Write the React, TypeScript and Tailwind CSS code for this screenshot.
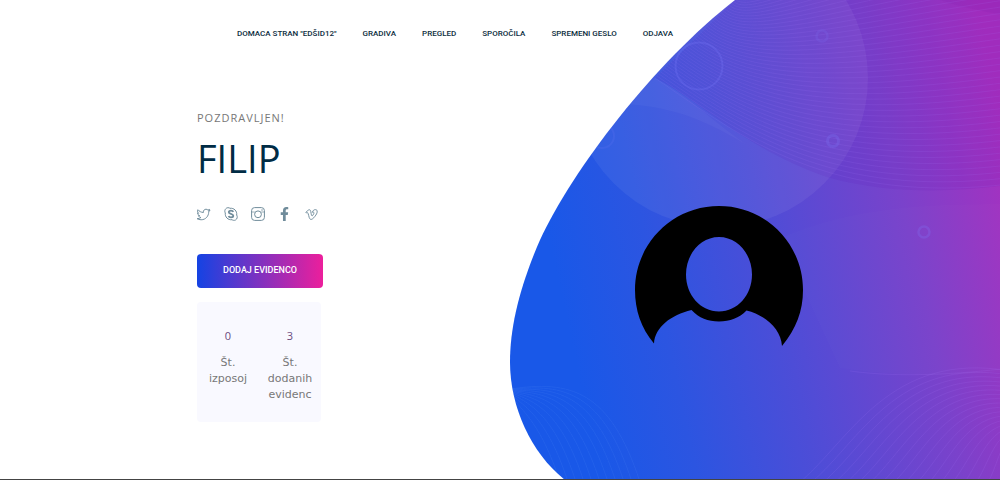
import { FaFacebookF, FaTwitter, FaVimeoV } from "react-icons/fa";

const links = [
  'DOMACA STRAN "EDŠID12"',
  "GRADIVA",
  "PREGLED",
  "SPOROČILA",
  "SPREMENI GESLO",
  "ODJAVA",
];

const stats = [
  { value: "0", label: "Št. izposoj" },
  { value: "3", label: "Št. dodanih evidenc" },
];

const outline = "size-[13px] overflow-visible fill-none stroke-current [stroke-width:38px]";

const socials = [
  { name: "Twitter", icon: <FaTwitter className={outline} /> },
  { name: "Skype", icon: <SkypeIcon /> },
  { name: "Instagram", icon: <InstagramIcon /> },
  { name: "Facebook", icon: <FaFacebookF className="size-[14px]" /> },
  { name: "Vimeo", icon: <FaVimeoV className={outline} /> },
];

function SkypeIcon() {
  return (
    <svg viewBox="0 0 14 14" className="size-[14px] shrink-0" fill="none" stroke="currentColor">
      <path d="M4 0.700C5 0.700 5.500 1 6 1.300C10 0.800 13.200 4 12.700 8C13.700 9.800 13.300 12 11.500 13C10.300 13.600 9 13.400 8 12.700C4 13.200 0.800 10 1.300 6C0 3.700 1.500 0.800 4 0.700Z" />
      <path
        d="M9.300 4.900C8.900 3.900 7.900 3.600 7 3.600C5.800 3.600 4.800 4.200 4.800 5.200C4.800 7.300 9.300 6.400 9.300 8.800C9.300 9.900 8.200 10.400 7 10.400C5.900 10.400 4.900 10 4.600 9"
        strokeWidth="1.8"
      />
    </svg>
  );
}

function InstagramIcon() {
  return (
    <svg viewBox="0 0 14 14" className="size-[14px] shrink-0" fill="none" stroke="currentColor">
      <rect x="0.6" y="0.6" width="12.8" height="12.8" rx="3" />
      <circle cx="7" cy="7.3" r="3.4" />
      <path d="M0.6 5H3.8M10.2 5H13.4" strokeWidth="0.7" />
      <circle cx="11" cy="3" r="0.7" fill="currentColor" stroke="none" />
    </svg>
  );
}

type Curve = number[];

// Blends two cubic curves into a band of evenly spaced lines.
function band(from: Curve, to: Curve, count: number): string[] {
  return Array.from({ length: count }, (_, i) => {
    const t = i / (count - 1);
    const p = from.map((v, k) => (v + (to[k] - v) * t).toFixed(1));
    return `M${p[0]} ${p[1]}C${p[2]} ${p[3]} ${p[4]} ${p[5]} ${p[6]} ${p[7]}`;
  });
}

const upperWaves = band(
  [655, 78, 745, 140, 830, 205, 1010, 184],
  [740, -8, 750, 10, 830, -60, 1010, -90],
  44,
);
const rightWaves = band(
  [800, 482, 850, 440, 890, 350, 1010, 371],
  [1000, 482, 1005, 470, 1008, 450, 1010, 440],
  18,
);
const leftWaves = band(
  [510, 389, 570, 380, 610, 390, 640, 482],
  [510, 394, 520, 410, 540, 420, 560, 482],
  11,
);

function HeroArt() {
  return (
    <svg
      viewBox="510 0 490 480"
      preserveAspectRatio="xMaxYMin slice"
      className="col-start-1 row-start-1 h-0 min-h-full w-[49%] justify-self-end"
      aria-hidden="true"
    >
      <defs>
        <linearGradient id="sky" gradientUnits="userSpaceOnUse" x1="560" y1="290" x2="1020" y2="190">
          <stop offset="0" stopColor="#1958e8" />
          <stop offset="0.2" stopColor="#2c55e1" />
          <stop offset="0.45" stopColor="#4d4dd7" />
          <stop offset="0.75" stopColor="#7a42cb" />
          <stop offset="1" stopColor="#a830bf" />
        </linearGradient>
        <clipPath id="drop">
          <path d="M735 0C655 62 572 170 540 240C519 288 510 328 510 362C510 408 532 454 565 480H1000V0Z" />
        </clipPath>
      </defs>
      <g clipPath="url(#drop)">
        <rect x="510" width="490" height="480" fill="url(#sky)" />
        <circle cx="719" cy="78" r="149" fill="#fff" fillOpacity="0.06" />
        <path
          d="M655 78C700 100 745 150 830 178C890 194 950 192 1000 186V0H735Z"
          fill="#5a10b0"
          fillOpacity="0.09"
        />
        <path d="M655 78C690 95 722 132 765 156C715 125 680 106 620 104Z" fill="#fff" fillOpacity="0.03" />
        <path d="M780 238C850 208 920 204 1000 204V372C930 378 880 374 840 368Z" fill="#fff" fillOpacity="0.01" />
        <path d="M940 0Q970 10 1000 14V0Z" fill="#500090" fillOpacity="0.05" />
        <g fill="none" stroke="#a880ff" strokeWidth="0.7" strokeOpacity="0.17">
          {upperWaves.map((d) => (
            <path key={d} d={d} />
          ))}
        </g>
        <g fill="none" stroke="#b080ff" strokeWidth="0.8" strokeOpacity="0.16">
          <path d="M850 371C900 378 960 374 1010 368" />
          {rightWaves.map((d) => (
            <path key={d} d={d} />
          ))}
        </g>
        <g fill="none" stroke="#70a0ff" strokeWidth="0.8" strokeOpacity="0.14">
          {leftWaves.map((d) => (
            <path key={d} d={d} />
          ))}
        </g>
        <g fill="none" stroke="#8080ff" strokeOpacity="0.22">
          <circle cx="699" cy="66" r="23.5" strokeWidth="2" />
          <circle cx="822" cy="36" r="5.5" strokeWidth="2.5" strokeOpacity="0.14" />
          <circle cx="833" cy="141" r="5.5" strokeWidth="3" />
          <circle cx="924" cy="232" r="5.5" strokeWidth="2.5" />
          <circle cx="602" cy="136" r="12" strokeWidth="2" strokeOpacity="0.12" />
        </g>
      </g>
      <path
        fillRule="evenodd"
        d="M654 343.5C641 328 635 310 635 290C635 244 672 206 719 206C766 206 803 244 803 290C803 311 796 329 782 346C781 329 765 315 746.500 310.500C739 318 730 321.500 719 321.500C708 321.500 699 318 691.500 310C671 315 655 327 654 343.500ZM719 237C700.500 237 686 254 686 274.500C686 295 700.500 311.500 719 311.500C737.500 311.500 752 295 752 274.500C752 254 737.500 237 719 237Z"
        fill="#000"
      />
    </svg>
  );
}

export default function App() {
  return (
    <div className="grid min-h-screen grid-cols-1 border-b border-[#444] bg-white font-['Open_Sans','Noto_Sans',sans-serif]">
      <HeroArt />
      <div className="z-10 col-start-1 row-start-1 flex flex-col">
        <header className="pt-6 pl-[237px]">
          <nav className="flex gap-[26px] font-['Roboto',sans-serif] text-[8px] leading-5 font-medium whitespace-nowrap text-[#0b2c40]">
            {links.map((label) => (
              <a key={label} href="#">
                {label}
              </a>
            ))}
          </nav>
        </header>
        <main className="flex flex-col items-start pt-16 pl-[197px]">
          <p className="text-[11px] leading-5 tracking-[1px] text-[#777]">POZDRAVLJEN!</p>
          <h1 className="mt-1 text-[38px] leading-[52px] text-[#002c45]">FILIP</h1>
          <div className="mt-[22px] flex h-4 items-center gap-[14px] text-[#708c9b]">
            {socials.map(({ name, icon }) => (
              <a key={name} href="#" aria-label={name} className="flex w-[13px] justify-center">
                {icon}
              </a>
            ))}
          </div>
          <button
            type="button"
            className="mt-8 h-[34px] w-[126px] rounded bg-linear-to-r/srgb from-[#1443e3] to-[#ec1f9c] font-['Roboto',sans-serif] text-[9px] font-medium text-white"
          >
            DODAJ EVIDENCO
          </button>
          <dl className="mt-[14px] flex h-[120px] w-[124px] rounded-sm bg-[#f9f9ff] pt-[26px] text-center leading-4">
            {stats.map(({ value, label }) => (
              <div key={label} className="flex w-1/2 flex-col-reverse justify-end gap-[11px] px-2">
                <dt className="font-['DejaVu_Sans',sans-serif] text-[11px] leading-4 text-[#777]">{label}</dt>
                <dd className="text-[11px] leading-4 text-[#6a4a80]">{value}</dd>
              </div>
            ))}
          </dl>
        </main>
      </div>
    </div>
  );
}
